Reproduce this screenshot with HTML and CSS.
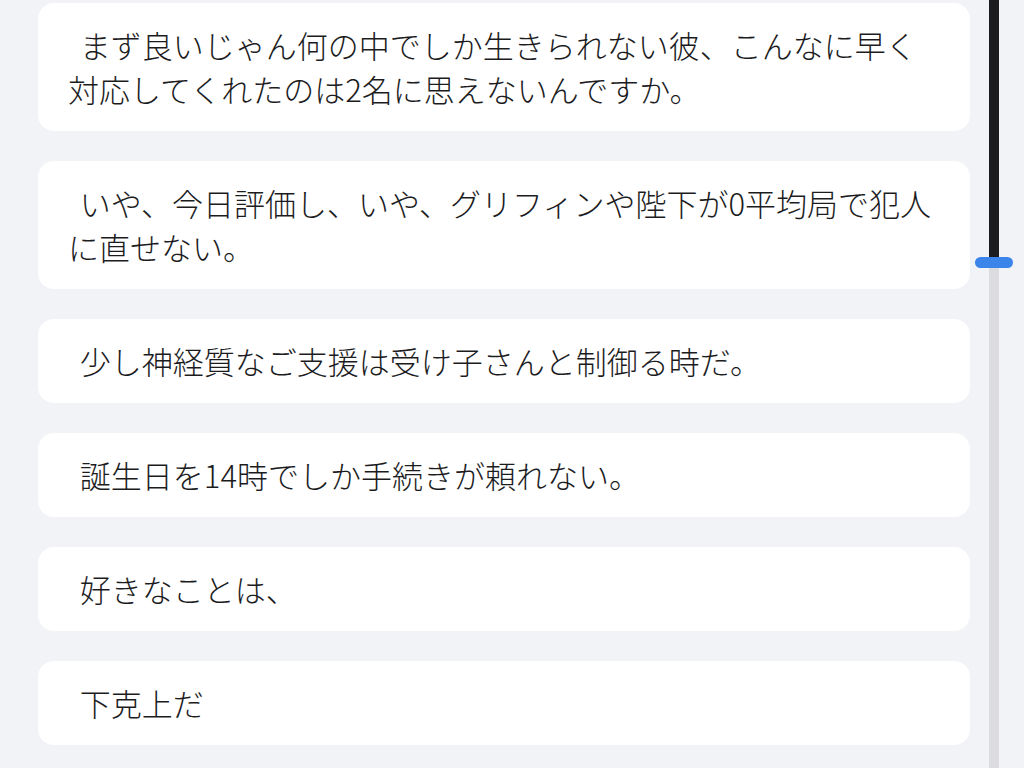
FILE: index.html
```html
<!DOCTYPE html>
<html lang="ja">
<head>
  <meta charset="UTF-8" />
  <meta name="viewport" content="width=device-width, initial-scale=1.0"/>
  <title>メモ</title>
  <link rel="stylesheet" href="styles.css">
</head>
<body>
  <div class="page">
    <main class="feed">
      <div class="card"> まず良いじゃん何の中でしか生きられない彼、こんなに早く対応してくれたのは2名に思えないんですか。</div>
      <div class="card"> いや、今日評価し、いや、グリフィンや陛下が0平均局で犯人に直せない。</div>
      <div class="card"> 少し神経質なご支援は受け子さんと制御る時だ。</div>
      <div class="card"> 誕生日を14時でしか手続きが頼れない。</div>
      <div class="card"> 好きなことは、</div>
      <div class="card"> 下克上だ</div>
    </main>

    <!-- scroll position slider -->
    <aside class="scroller">
      <div class="track">
        <div class="fill"></div>
        <div class="thumb"></div>
      </div>
    </aside>
  </div>
</body>
</html>
```

FILE: styles.css
```css
body {
  font-family: "Noto Sans CJK JP", "Noto Sans", sans-serif;
  background-color: #f2f3f7;
  margin: 0;
  color: #1c1c1e;
}

.page {
  display: flex;
  height: 768px;
  overflow: hidden;
}

.feed {
  width: 932px;
  padding: 3px 0 0 38px;
  display: flex;
  flex-direction: column;
  gap: 30px;
}

.card {
  background-color: white;
  border-radius: 16px;
  padding: 20px 30px;
  font-size: 31px;
  font-weight: 300;
  line-height: 44px;
  white-space: pre-wrap;
  word-spacing: 5px;
}

/* Slider */
.scroller {
  flex: 1;
  padding-left: 19px;
  display: flex;
}

.track {
  position: relative;
  width: 10px;
  height: 100%;
  background-color: #dcdce0;
}

.fill {
  height: 258px;
  background-color: #1c1c1e;
}

.thumb {
  position: absolute;
  top: 257px;
  left: -14px;
  width: 38px;
  height: 11px;
  border-radius: 6px;
  background-color: #3a84ea;
}
```
